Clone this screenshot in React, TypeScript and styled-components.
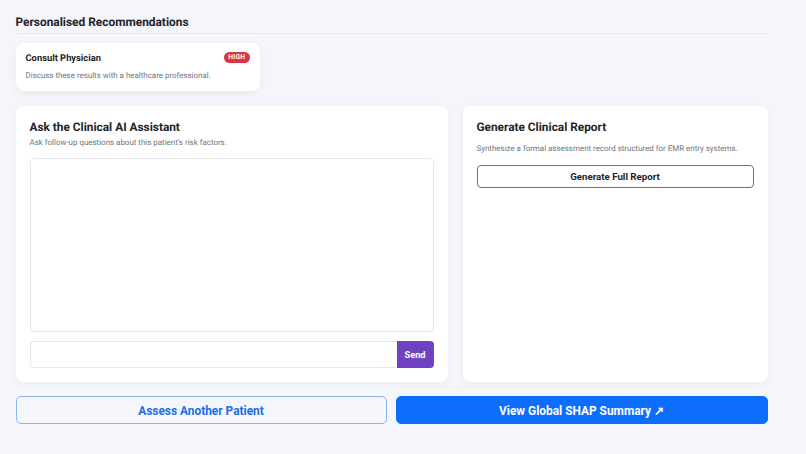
import React from "react";
import styled, { createGlobalStyle } from "styled-components";

const FONT = `Roboto, "Noto Sans", sans-serif`;

const Global = createGlobalStyle`
  html, body { margin: 0; padding: 0; background: #f4f6fb; }
  body { font-family: ${FONT}; overflow: hidden; text-rendering: geometricPrecision; }
  * { box-sizing: border-box; }
`;

const Page = styled.div`
  width: 806px;
  height: 454px;
  padding: 14px 38px 0 15.5px;
  display: flex;
  flex-direction: column;
`;

const SectionTitle = styled.h2`
  margin: 0;
  font-size: 11.9px;
  line-height: 16px;
  font-weight: 700;
  color: #1f2328;
  padding: 0 0 3px;
  border-bottom: 1px solid #e6e8ee;
`;

const RecCard = styled.div`
  margin-top: 9px;
  width: 244px;
  height: 48px;
  background: #fff;
  border-radius: 8px;
  box-shadow: 0 2px 8px rgba(20, 30, 60, 0.06);
  padding: 9px 10px 0 10px;
`;

const RecHead = styled.div`
  display: flex;
  justify-content: space-between;
  align-items: flex-start;
  height: 14px;
`;

const RecTitle = styled.span`
  font-size: 9.35px;
  line-height: 14px;
  font-weight: 700;
  color: #1f2328;
`;

const Badge = styled.span`
  background: #dc3545;
  color: #fff;
  font-size: 6.8px;
  font-weight: 700;
  line-height: 11px;
  padding: 0 4.2px;
  border-radius: 6px;
  letter-spacing: 0.2px;
`;

const RecText = styled.p`
  margin: 4px 0 0;
  font-size: 7.95px;
  line-height: 12px;
  color: #6c757d;
`;

const Panels = styled.div`
  margin-top: 15px;
  display: grid;
  grid-template-columns: 432px 305px;
  gap: 15px;
  height: 276px;
`;

const Panel = styled.section`
  background: #fff;
  border-radius: 8px;
  box-shadow: 0 2px 8px rgba(20, 30, 60, 0.05);
  padding: 14px;
  display: flex;
  flex-direction: column;
`;

const PanelTitle = styled.h3`
  margin: 0;
  font-size: 11.85px;
  line-height: 15px;
  font-weight: 700;
  color: #212529;
`;

const Muted = styled.p<{ $top: number }>`
  margin: ${(p) => p.$top}px 0 0;
  font-size: 7.95px;
  line-height: 11px;
  color: #6c757d;
`;

const ChatLog = styled.div`
  margin-top: 10px;
  height: 174px;
  border: 1px solid #e6e8ee;
  border-radius: 4px;
  background: #fff;
`;

const InputRow = styled.div`
  margin-top: 9px;
  display: flex;
  height: 27px;
`;

const ChatInput = styled.input`
  flex: 1;
  min-width: 0;
  border: 1px solid #e6e8ee;
  border-right: none;
  border-radius: 4px 0 0 4px;
  background: #fff;
  outline: none;
`;

const SendButton = styled.button`
  width: 37px;
  border: none;
  border-radius: 0 4px 4px 0;
  background: #6f42c1;
  color: #fff;
  font: 700 9.2px ${FONT};
  padding: 0;
`;

const OutlineButton = styled.button`
  margin-top: 11px;
  height: 23px;
  border: 1px solid #6c7075;
  border-radius: 4px;
  background: #fff;
  color: #212529;
  font: 700 9.7px ${FONT};
  padding: 0;
`;

const Actions = styled.div`
  margin-top: 14px;
  display: grid;
  grid-template-columns: 371px 372px;
  gap: 9px;
  height: 28px;
`;

const ActionButton = styled.button<{ $primary?: boolean }>`
  border-radius: 5px;
  border: 1px solid ${(p) => (p.$primary ? "#0d6efd" : "#8ab4f0")};
  background: ${(p) => (p.$primary ? "#0d6efd" : "transparent")};
  color: ${(p) => (p.$primary ? "#fff" : "#1a6fe8")};
  font: 700 11.9px ${FONT};
  padding: 1px 0 0;
`;

export default function App() {
  return (
    <Page>
      <Global />
      <SectionTitle>Personalised Recommendations</SectionTitle>
      <RecCard>
        <RecHead>
          <RecTitle>Consult Physician</RecTitle>
          <Badge>HIGH</Badge>
        </RecHead>
        <RecText>Discuss these results with a healthcare professional.</RecText>
      </RecCard>
      <Panels>
        <Panel>
          <PanelTitle>Ask the Clinical AI Assistant</PanelTitle>
          <Muted $top={2}>Ask follow-up questions about this patient's risk factors.</Muted>
          <ChatLog />
          <InputRow>
            <ChatInput />
            <SendButton>Send</SendButton>
          </InputRow>
        </Panel>
        <Panel>
          <PanelTitle>Generate Clinical Report</PanelTitle>
          <Muted $top={8}>Synthesize a formal assessment record structured for EMR entry systems.</Muted>
          <OutlineButton>Generate Full Report</OutlineButton>
        </Panel>
      </Panels>
      <Actions>
        <ActionButton>Assess Another Patient</ActionButton>
        <ActionButton $primary>View Global SHAP Summary ↗</ActionButton>
      </Actions>
    </Page>
  );
}
